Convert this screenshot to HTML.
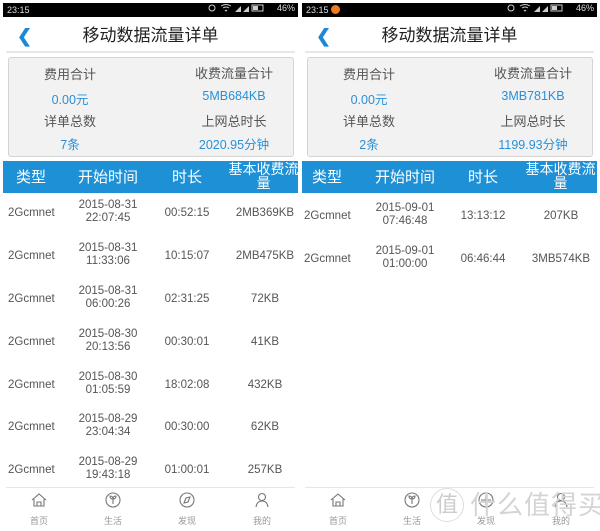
<!DOCTYPE html>
<html><head><meta charset="utf-8">
<style>
*{margin:0;padding:0;box-sizing:border-box}
body{width:600px;height:531px;background:#fff;position:relative;overflow:hidden;font-family:"Liberation Sans","Noto Sans CJK SC",sans-serif}
.p{position:absolute;top:0;width:295px;height:531px;background:#fff}
.sb{position:absolute;left:0;top:3px;width:295px;height:14px;background:#000;color:#ddd;font-size:9px;line-height:14px;padding-left:4px}
.sb .r{position:absolute;right:3px;top:0}
.t{position:absolute;left:0;width:295px;top:25px;text-align:center;font-size:17px;color:#222;line-height:22px}
.bk{position:absolute;left:14px;top:26px;color:#1e88d4;font-size:18px;font-weight:bold;line-height:20px}
.ln{position:absolute;left:3px;width:289px;top:51px;height:2px;background:#e8e8e8}
.card{position:absolute;left:5px;top:57px;width:286px;height:100px;background:#f2f2f2;border:1px solid #d4d4d4;border-radius:3px}
.c{position:absolute;width:130px;text-align:center;font-size:13px;line-height:16px;color:#555}
.c.v{color:#2990d8;font-size:12.5px}
.hd{position:absolute;left:0;top:161px;width:295px;height:32px;background:#1e90d6;overflow:hidden}
.h{position:absolute;color:#fff;font-size:15px;line-height:17px;text-align:center;width:80px;top:8px}
.h.w{width:71px;font-size:14px;line-height:14px;top:1px;white-space:normal;word-break:break-all}
.row{position:absolute;left:0;width:295px;height:30px;font-size:11.5px;color:#555}
.row div{position:absolute;text-align:center;line-height:13px}
.nl{position:absolute;left:3px;width:289px;top:487px;height:1px;background:#e6e6e6}
.ni{position:absolute;top:492px;width:40px;text-align:center}
.ni span{display:block;font-size:9px;color:#999;margin-top:3px;line-height:11px}
</style></head><body>

<!-- LEFT -->
<div class="p" style="left:3px">
<div class="sb">23:15<span class="r"><svg width="70" height="10" viewBox="0 0 70 10"><circle cx="5" cy="5" r="3" fill="none" stroke="#ccc"/><path d="M14 3q5-3 10 0M16 5q3-2 6 0M18 7l1 1 1-1" stroke="#ccc" fill="none"/><path d="M28 9h6V3z M36 9h6V3z" fill="#ccc"/><rect x="45" y="2" width="11" height="6" fill="none" stroke="#ccc"/><rect x="46" y="3" width="5" height="4" fill="#ccc"/></svg><span style="position:relative;top:-2px">46%</span></span></div>
<div class="bk">&#x276E;</div>
<div class="t">移动数据流量详单</div>
<div class="ln"></div>
<div class="card">
<div class="c" style="left:-4px;top:9px">费用合计</div>
<div class="c v" style="left:-4px;top:34px">0.00元</div>
<div class="c" style="left:160px;top:8px">收费流量合计</div>
<div class="c v" style="left:160px;top:30px">5MB684KB</div>
<div class="c" style="left:-4px;top:56px">详单总数</div>
<div class="c v" style="left:-4px;top:79px">7条</div>
<div class="c" style="left:160px;top:56px">上网总时长</div>
<div class="c v" style="left:160px;top:79px">2020.95分钟</div>
</div>
<div class="hd">
<div class="h" style="left:-12px">类型</div>
<div class="h" style="left:65px">开始时间</div>
<div class="h" style="left:144px">时长</div>
<div class="h w" style="left:225px">基本收费流量</div>
</div>
<div class="row" style="top:199px"><div style="left:5px;top:8px">2Gcmnet</div><div style="left:65px;width:80px;top:0">2015-08-31<br>22:07:45</div><div style="left:144px;width:80px;top:8px">00:52:15</div><div style="left:222px;width:80px;top:8px">2MB369KB</div></div>
<div class="row" style="top:242px"><div style="left:5px;top:8px">2Gcmnet</div><div style="left:65px;width:80px;top:0">2015-08-31<br>11:33:06</div><div style="left:144px;width:80px;top:8px">10:15:07</div><div style="left:222px;width:80px;top:8px">2MB475KB</div></div>
<div class="row" style="top:285px"><div style="left:5px;top:8px">2Gcmnet</div><div style="left:65px;width:80px;top:0">2015-08-31<br>06:00:26</div><div style="left:144px;width:80px;top:8px">02:31:25</div><div style="left:222px;width:80px;top:8px">72KB</div></div>
<div class="row" style="top:328px"><div style="left:5px;top:8px">2Gcmnet</div><div style="left:65px;width:80px;top:0">2015-08-30<br>20:13:56</div><div style="left:144px;width:80px;top:8px">00:30:01</div><div style="left:222px;width:80px;top:8px">41KB</div></div>
<div class="row" style="top:371px"><div style="left:5px;top:8px">2Gcmnet</div><div style="left:65px;width:80px;top:0">2015-08-30<br>01:05:59</div><div style="left:144px;width:80px;top:8px">18:02:08</div><div style="left:222px;width:80px;top:8px">432KB</div></div>
<div class="row" style="top:413px"><div style="left:5px;top:8px">2Gcmnet</div><div style="left:65px;width:80px;top:0">2015-08-29<br>23:04:34</div><div style="left:144px;width:80px;top:8px">00:30:00</div><div style="left:222px;width:80px;top:8px">62KB</div></div>
<div class="row" style="top:456px"><div style="left:5px;top:8px">2Gcmnet</div><div style="left:65px;width:80px;top:0">2015-08-29<br>19:43:18</div><div style="left:144px;width:80px;top:8px">01:00:01</div><div style="left:222px;width:80px;top:8px">257KB</div></div>
<div class="nl"></div>
<div class="ni" style="left:16px"><svg width="16" height="16" viewBox="0 0 16 16" fill="none" stroke="#777" stroke-width="1.1"><path d="M1 8L8 2l7 6M3 7v7h10V7M6 14v-4h4v4"/></svg><span>首页</span></div>
<div class="ni" style="left:90px"><svg width="16" height="16" viewBox="0 0 16 16" fill="none" stroke="#777" stroke-width="1.1"><circle cx="8" cy="8" r="7"/><path d="M8 12V7M8 7q-3 0-3-3q3 0 3 3q0-3 3-3q0 3-3 3"/></svg><span>生活</span></div>
<div class="ni" style="left:164px"><svg width="16" height="16" viewBox="0 0 16 16" fill="none" stroke="#777" stroke-width="1.1"><circle cx="8" cy="8" r="7"/><path d="M5 11l2-5 4-1-2 5z"/></svg><span>发现</span></div>
<div class="ni" style="left:239px"><svg width="16" height="16" viewBox="0 0 16 16" fill="none" stroke="#777" stroke-width="1.1"><circle cx="8" cy="5" r="3.5"/><path d="M2 15q1-6 6-6t6 6"/></svg><span>我的</span></div>
</div>

<!-- RIGHT -->
<div class="p" style="left:302px">
<div class="sb">23:15 <span style="display:inline-block;width:9px;height:9px;border-radius:50%;background:#f07a20;vertical-align:-1px"></span><span class="r"><svg width="70" height="10" viewBox="0 0 70 10"><circle cx="5" cy="5" r="3" fill="none" stroke="#ccc"/><path d="M14 3q5-3 10 0M16 5q3-2 6 0M18 7l1 1 1-1" stroke="#ccc" fill="none"/><path d="M28 9h6V3z M36 9h6V3z" fill="#ccc"/><rect x="45" y="2" width="11" height="6" fill="none" stroke="#ccc"/><rect x="46" y="3" width="5" height="4" fill="#ccc"/></svg><span style="position:relative;top:-2px">46%</span></span></div>
<div class="bk">&#x276E;</div>
<div class="t">移动数据流量详单</div>
<div class="ln"></div>
<div class="card">
<div class="c" style="left:-4px;top:9px">费用合计</div>
<div class="c v" style="left:-4px;top:34px">0.00元</div>
<div class="c" style="left:160px;top:8px">收费流量合计</div>
<div class="c v" style="left:160px;top:30px">3MB781KB</div>
<div class="c" style="left:-4px;top:56px">详单总数</div>
<div class="c v" style="left:-4px;top:79px">2条</div>
<div class="c" style="left:160px;top:56px">上网总时长</div>
<div class="c v" style="left:160px;top:79px">1199.93分钟</div>
</div>
<div class="hd">
<div class="h" style="left:-15px">类型</div>
<div class="h" style="left:63px">开始时间</div>
<div class="h" style="left:141px">时长</div>
<div class="h w" style="left:223px">基本收费流量</div>
</div>
<div class="row" style="top:202px"><div style="left:2px;top:8px">2Gcmnet</div><div style="left:63px;width:80px;top:0">2015-09-01<br>07:46:48</div><div style="left:141px;width:80px;top:8px">13:13:12</div><div style="left:219px;width:80px;top:8px">207KB</div></div>
<div class="row" style="top:245px"><div style="left:2px;top:8px">2Gcmnet</div><div style="left:63px;width:80px;top:0">2015-09-01<br>01:00:00</div><div style="left:141px;width:80px;top:8px">06:46:44</div><div style="left:219px;width:80px;top:8px">3MB574KB</div></div>
<div class="nl"></div>
<div class="ni" style="left:16px"><svg width="16" height="16" viewBox="0 0 16 16" fill="none" stroke="#777" stroke-width="1.1"><path d="M1 8L8 2l7 6M3 7v7h10V7M6 14v-4h4v4"/></svg><span>首页</span></div>
<div class="ni" style="left:90px"><svg width="16" height="16" viewBox="0 0 16 16" fill="none" stroke="#777" stroke-width="1.1"><circle cx="8" cy="8" r="7"/><path d="M8 12V7M8 7q-3 0-3-3q3 0 3 3q0-3 3-3q0 3-3 3"/></svg><span>生活</span></div>
<div class="ni" style="left:164px"><svg width="16" height="16" viewBox="0 0 16 16" fill="none" stroke="#777" stroke-width="1.1"><circle cx="8" cy="8" r="7"/><path d="M8 3v10M3 8h10"/></svg><span>发现</span></div>
<div class="ni" style="left:239px"><svg width="16" height="16" viewBox="0 0 16 16" fill="none" stroke="#777" stroke-width="1.1"><circle cx="8" cy="5" r="3.5"/><path d="M2 15q1-6 6-6t6 6"/></svg><span>我的</span></div>
</div>

<!-- watermark -->
<div style="position:absolute;left:430px;top:488px;width:34px;height:34px;border:1.5px solid #ddd;border-radius:50%;color:#ccc;font-size:22px;line-height:31px;text-align:center">值</div>
<div style="position:absolute;left:470px;top:490px;color:#d4d4d4;font-size:26px;line-height:30px;white-space:nowrap;letter-spacing:1px">什么值得买</div>
</body></html>
